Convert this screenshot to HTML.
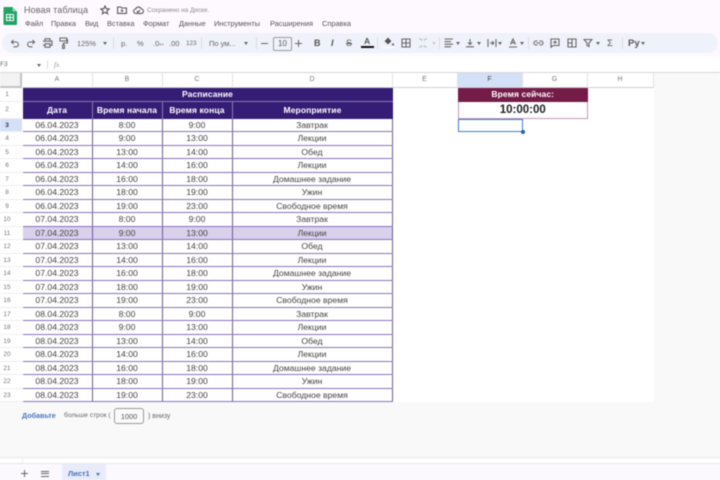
<!DOCTYPE html>
<html lang="ru">
<head>
<meta charset="utf-8">
<title>Новая таблица</title>
<style>
html,body{margin:0;padding:0;width:720px;height:480px;overflow:hidden;background:#fdf9fe}
body{position:relative;font-family:"Liberation Sans","Noto Sans CJK SC",sans-serif;color:#444}
#w{position:absolute;left:0;top:0;width:720px;height:480px;filter:blur(.5px)}
.a{position:absolute;white-space:nowrap}
.m{font-size:7.4px;top:19px;color:#555}
.c{position:absolute;top:0;height:100%;box-sizing:border-box;text-align:center;overflow:hidden}
.r{position:absolute;left:22.5px;width:370px;height:13.52px;font-size:8.65px;line-height:13px;color:#444;border-bottom:1px solid #8872bd;box-sizing:border-box}
.r .c{border-right:1px solid #6d5c97}
.n{position:absolute;left:0;width:22px;padding-right:8px;text-align:center;font-size:6.5px;color:#777;height:13.52px;line-height:13px;background:#fff;border-bottom:1px solid #eeeef0;box-sizing:border-box}
.h{position:absolute;top:73px;height:15px;line-height:14px;text-align:center;font-size:7px;color:#777;background:#fff;border-right:1px solid #e2e2e4;border-bottom:1px solid #d0d0d2;box-sizing:border-box}
.ic{font-size:8px;color:#666;top:38px;line-height:10px}
.ar{border:2.2px solid transparent;border-top:3px solid #666;top:42px}
.sp{top:37px;width:1px;height:12px;background:#dcdde6}
svg{display:block;fill:none;stroke:#666;stroke-width:1.1}
</style>
</head>
<body>
<div id="w">
<!-- top -->
<svg class="a" style="left:3px;top:7px;stroke:none" width="14" height="18" viewBox="0 0 14 18"><path d="M1.500 0H9.500L14 4.500V17a1 1 0 0 1-1 1H1.500a1 1 0 0 1-1-1V1a1 1 0 0 1 1-1z" fill="#1fa463"/><path d="M9.500 0L14 4.500H9.500z" fill="#8fd3ad"/><rect x="3.500" y="7.500" width="7" height="6" fill="none" stroke="#fff" stroke-width="1"/><path d="M3.500 10.500h7M7 7.500v6" stroke="#fff" stroke-width=".9"/></svg>
<div class="a" style="left:24px;top:3px;font-size:9px;color:#666;line-height:14px;letter-spacing:.1px">Новая таблица</div>
<svg class="a" style="left:100px;top:5px" width="10" height="10" viewBox="0 0 10 10"><path d="M5 1l1.200 2.700 2.900.3-2.200 1.900.7 2.900L5 7.300 2.400 8.800l.7-2.900L.9 4l2.900-.3z" stroke="#555"/></svg>
<svg class="a" style="left:117px;top:6px" width="10" height="8" viewBox="0 0 10 8"><path d="M.6 1h3l1 1h4.800v5.400H.6zM5 3.400v2.600M3.800 4.700h2.400" stroke="#555"/></svg>
<svg class="a" style="left:133px;top:6px" width="11" height="8" viewBox="0 0 11 8"><path d="M3 7.400a2.200 2.200 0 0 1-.3-4.400A3 3 0 0 1 8.300 3a2.200 2.200 0 0 1-.1 4.400zM3.800 5l1.200 1.200L7 4.200" stroke="#555"/></svg>
<div class="a" style="left:147px;top:6px;font-size:6.200px;color:#888;line-height:9px;letter-spacing:.1px">Сохранено на Диске.</div>
<div class="a m" style="left:25px">Файл</div>
<div class="a m" style="left:51px">Правка</div>
<div class="a m" style="left:85px">Вид</div>
<div class="a m" style="left:107px">Вставка</div>
<div class="a m" style="left:143px">Формат</div>
<div class="a m" style="left:179px">Данные</div>
<div class="a m" style="left:214px">Инструменты</div>
<div class="a m" style="left:270px">Расширения</div>
<div class="a m" style="left:322px">Справка</div>

<!-- toolbar -->
<div class="a" style="left:2px;top:33px;width:716px;height:20px;border-radius:10px;background:#f0f2fb"></div>
<svg class="a" style="left:10px;top:38px" width="10" height="10" viewBox="0 0 10 10"><path d="M3.500 2L1.500 4l2 2M1.500 4h4.500a2.400 2.400 0 0 1 0 4.800H3.500"/></svg>
<svg class="a" style="left:26px;top:38px" width="10" height="10" viewBox="0 0 10 10"><path d="M6.500 2l2 2-2 2M8.500 4H4a2.400 2.400 0 0 0 0 4.800h2.500"/></svg>
<svg class="a" style="left:42px;top:38px" width="11" height="10" viewBox="0 0 11 10"><path d="M3 3V.8h5V3M1 3.200h9v4H8M3 7.200H1M3 5.800h5v3.400H3z"/></svg>
<svg class="a" style="left:59px;top:37px" width="9" height="12" viewBox="0 0 9 12"><path d="M1 1h6.500v3H1zM7.500 2.500H8.500V6H4.500v2M3.600 8h1.800v3.400H3.600z"/></svg>
<div class="a ic" style="left:77px;font-size:7.400px;top:38.500px">125%</div>
<div class="a ar" style="left:103px"></div>
<div class="a sp" style="left:113px"></div>
<div class="a ic" style="left:121px;top:38.500px;font-size:7.500px">р.</div>
<div class="a ic" style="left:137px;top:38.500px;font-size:7.500px">%</div>
<div class="a ic" style="left:153px;top:38.500px;font-size:7.500px">.0<span style="font-size:5px">↤</span></div>
<div class="a ic" style="left:169px;top:38.500px;font-size:7.500px">.00</div>
<div class="a ic" style="left:186px;top:39px;font-size:6.300px">123</div>
<div class="a sp" style="left:201px"></div>
<div class="a ic" style="left:209px;top:38.500px;font-size:7.500px">По ум...</div>
<div class="a ar" style="left:244px"></div>
<div class="a sp" style="left:256px"></div>
<div class="a" style="left:261px;top:42.500px;width:7px;height:1.100px;background:#666"></div>
<div class="a" style="left:273px;top:37px;width:17px;height:12px;border:.9px solid #999;border-radius:2px;text-align:center;font-size:8px;line-height:12px;color:#555"> 10</div>
<div class="a" style="left:295px;top:42.500px;width:7px;height:1.100px;background:#666"></div>
<div class="a" style="left:298px;top:39.500px;width:1.100px;height:7px;background:#666"></div>
<div class="a" style="left:314px;top:37.500px;font-size:9px;font-weight:bold;color:#555;line-height:11px">B</div>
<div class="a" style="left:331px;top:37.500px;font-size:9px;font-style:italic;font-weight:bold;color:#555;line-height:11px">I</div>
<div class="a" style="left:346px;top:37.500px;font-size:9px;color:#555;line-height:11px;text-decoration:line-through">S</div>
<div class="a" style="left:364px;top:37px;font-size:8.500px;font-weight:bold;color:#555;line-height:9px">A</div>
<div class="a" style="left:361px;top:46px;width:13px;height:2px;background:#111"></div>
<div class="a sp" style="left:377px"></div>
<svg class="a" style="left:384px;top:37px" width="11" height="9" viewBox="0 0 11 9"><path d="M4 1L1 4.200 4 7l3-2.800zM9 6.500l1 1.500H8z" fill="#555" stroke="#555" stroke-width=".6"/></svg>
<div class="a" style="left:383px;top:46.500px;width:12px;height:1.500px;background:#fff"></div>
<svg class="a" style="left:401px;top:38px" width="10" height="10" viewBox="0 0 10 10"><path d="M1 1h8v8H1zM5 1v8M1 5h8"/></svg>
<svg class="a" style="left:418px;top:38px;opacity:.45" width="10" height="10" viewBox="0 0 10 10"><path d="M1 1h2.500v2.500M9 1H6.500v2.500M1 9h2.500V6.500M9 9H6.500V6.500" stroke-dasharray="1.600 .8"/></svg>
<div class="a" style="left:432px;top:42px;border:2.200px solid transparent;border-top:3px solid #ccc"></div>
<div class="a sp" style="left:439px"></div>
<svg class="a" style="left:444px;top:38px" width="10" height="10" viewBox="0 0 10 10"><path d="M.5 1h8.500M.5 3.600h6.500M.5 6.200h8.500M.5 8.800h6.500"/></svg>
<div class="a ar" style="left:456px"></div>
<svg class="a" style="left:465px;top:38px" width="10" height="10" viewBox="0 0 10 10"><path d="M5 1v5.500M3 4.500l2 2 2-2M1 8.800h8"/></svg>
<div class="a ar" style="left:477px"></div>
<svg class="a" style="left:487px;top:38px" width="10" height="10" viewBox="0 0 10 10"><path d="M1 1v8M9 1v8M3 5h3.500M5 3.200l1.800 1.800L5 6.800"/></svg>
<div class="a ar" style="left:498px"></div>
<svg class="a" style="left:508px;top:38px" width="10" height="10" viewBox="0 0 10 10"><path d="M2.500 6.500L5 1l2.500 5.500M3.400 4.800h3.200M1 9h8"/></svg>
<div class="a ar" style="left:520px"></div>
<div class="a sp" style="left:528px"></div>
<svg class="a" style="left:533px;top:40px" width="11" height="6" viewBox="0 0 11 6"><path d="M4.500 1H3a2 2 0 0 0 0 4h1.500M6.500 1H8a2 2 0 0 1 0 4H6.500M3.500 3h4"/></svg>
<svg class="a" style="left:550px;top:38px" width="10" height="10" viewBox="0 0 10 10"><path d="M1 1h8v6.500H3L1 9.300zM5 2.500v3.500M3.200 4.200h3.600"/></svg>
<svg class="a" style="left:567px;top:38px" width="10" height="10" viewBox="0 0 10 10"><path d="M1 1h8v8H1zM5 1v8M1 5h4"/></svg>
<svg class="a" style="left:583px;top:38px" width="10" height="10" viewBox="0 0 10 10"><path d="M1 1.500h8L6 5v3.500L4 7.500V5z"/></svg>
<div class="a ar" style="left:596px"></div>
<div class="a" style="left:607px;top:37.500px;font-size:9.500px;color:#555;line-height:11px">Σ</div>
<div class="a sp" style="left:622px"></div>
<div class="a" style="left:628px;top:37.500px;font-size:9.500px;font-weight:bold;color:#555;line-height:11px">Ру</div>
<div class="a ar" style="left:641px"></div>

<!-- formula bar -->
<div class="a" style="left:0;top:56px;width:720px;height:16px;background:#fff"></div>
<div class="a" style="left:0;top:60px;font-size:6.500px;color:#666;line-height:9px">F3</div>
<div class="a" style="left:37px;top:63.500px;border:2.200px solid transparent;border-top:3px solid #666"></div>
<div class="a" style="left:47px;top:60px;width:1px;height:9px;background:#ddd"></div>
<div class="a" style="left:54px;top:60px;font-size:7.500px;font-style:italic;color:#999;line-height:9px;font-family:'Liberation Serif',serif">fx</div>

<!-- sheet bg -->
<div class="a" style="left:0;top:72px;width:720px;height:385px;background:#f9f9fa;border-top:1px solid #d8d8da;box-sizing:border-box"></div>
<div class="a" style="left:22px;top:88px;width:632px;height:314px;background:#fff"></div>
<div class="a" style="left:0;top:73px;width:22px;height:15px;background:#f3f3f4;border-right:2px solid #c4c4c6;border-bottom:2px solid #c4c4c6;box-sizing:border-box"></div>
<div class="h" style="left:22.500px;width:70px">A</div>
<div class="h" style="left:92.500px;width:70px">B</div>
<div class="h" style="left:162.500px;width:70px">C</div>
<div class="h" style="left:232.500px;width:160px">D</div>
<div class="h" style="left:392.500px;width:65px">E</div>
<div class="h" style="left:457.500px;width:65px;background:#d3e0f8;color:#444">F</div>
<div class="h" style="left:522.500px;width:65px">G</div>
<div class="h" style="left:587.500px;width:66px">H</div>

<!-- row numbers -->
<div class="n" style="top:88px;height:13.500px">1</div>
<div class="n" style="top:101.500px;height:17px;line-height:16px">2</div>
<div class="n" style="top:118.500px;background:#d3e0f8;color:#333;font-weight:bold">3</div>
<div class="n" style="top:132.020px">4</div>
<div class="n" style="top:145.540px">5</div>
<div class="n" style="top:159.060px">6</div>
<div class="n" style="top:172.580px">7</div>
<div class="n" style="top:186.100px">8</div>
<div class="n" style="top:199.620px">9</div>
<div class="n" style="top:213.140px">10</div>
<div class="n" style="top:226.660px">11</div>
<div class="n" style="top:240.180px">12</div>
<div class="n" style="top:253.700px">13</div>
<div class="n" style="top:267.220px">14</div>
<div class="n" style="top:280.740px">15</div>
<div class="n" style="top:294.260px">16</div>
<div class="n" style="top:307.780px">17</div>
<div class="n" style="top:321.300px">18</div>
<div class="n" style="top:334.820px">19</div>
<div class="n" style="top:348.340px">20</div>
<div class="n" style="top:361.860px">21</div>
<div class="n" style="top:375.380px">22</div>
<div class="n" style="top:388.900px">23</div>

<!-- headers -->
<div class="a" style="left:22.500px;top:88px;width:370px;height:13.500px;background:#351c75;color:#fff;font-size:8.500px;font-weight:bold;text-align:center;line-height:13px;letter-spacing:.1px;border-bottom:1px solid #8a78b5;box-sizing:border-box">Расписание</div>
<div class="a" style="left:22.500px;top:101.500px;width:370px;height:17px;background:#351c75;color:#fff;font-size:8.500px;font-weight:bold;line-height:17px;letter-spacing:.1px">
<div class="c" style="left:0;width:70px;border-right:1px solid #8a78b5">Дата</div>
<div class="c" style="left:70px;width:70px;border-right:1px solid #8a78b5">Время начала</div>
<div class="c" style="left:140px;width:70px;border-right:1px solid #8a78b5">Время конца</div>
<div class="c" style="left:210px;width:160px">Мероприятие</div>
</div>

<!-- rows -->
<div class="r" style="top:118.500px"><div class="c" style="left:0;width:70px">06.04.2023</div><div class="c" style="left:70px;width:70px">8:00</div><div class="c" style="left:140px;width:70px">9:00</div><div class="c" style="left:210px;width:160px">Завтрак</div></div>
<div class="r" style="top:132.020px"><div class="c" style="left:0;width:70px">06.04.2023</div><div class="c" style="left:70px;width:70px">9:00</div><div class="c" style="left:140px;width:70px">13:00</div><div class="c" style="left:210px;width:160px">Лекции</div></div>
<div class="r" style="top:145.540px"><div class="c" style="left:0;width:70px">06.04.2023</div><div class="c" style="left:70px;width:70px">13:00</div><div class="c" style="left:140px;width:70px">14:00</div><div class="c" style="left:210px;width:160px">Обед</div></div>
<div class="r" style="top:159.060px"><div class="c" style="left:0;width:70px">06.04.2023</div><div class="c" style="left:70px;width:70px">14:00</div><div class="c" style="left:140px;width:70px">16:00</div><div class="c" style="left:210px;width:160px">Лекции</div></div>
<div class="r" style="top:172.580px"><div class="c" style="left:0;width:70px">06.04.2023</div><div class="c" style="left:70px;width:70px">16:00</div><div class="c" style="left:140px;width:70px">18:00</div><div class="c" style="left:210px;width:160px">Домашнее задание</div></div>
<div class="r" style="top:186.100px"><div class="c" style="left:0;width:70px">06.04.2023</div><div class="c" style="left:70px;width:70px">18:00</div><div class="c" style="left:140px;width:70px">19:00</div><div class="c" style="left:210px;width:160px">Ужин</div></div>
<div class="r" style="top:199.620px"><div class="c" style="left:0;width:70px">06.04.2023</div><div class="c" style="left:70px;width:70px">19:00</div><div class="c" style="left:140px;width:70px">23:00</div><div class="c" style="left:210px;width:160px">Свободное время</div></div>
<div class="r" style="top:213.140px"><div class="c" style="left:0;width:70px">07.04.2023</div><div class="c" style="left:70px;width:70px">8:00</div><div class="c" style="left:140px;width:70px">9:00</div><div class="c" style="left:210px;width:160px">Завтрак</div></div>
<div class="r" style="top:226.660px;background:#d9d0ec"><div class="c" style="left:0;width:70px">07.04.2023</div><div class="c" style="left:70px;width:70px">9:00</div><div class="c" style="left:140px;width:70px">13:00</div><div class="c" style="left:210px;width:160px">Лекции</div></div>
<div class="r" style="top:240.180px"><div class="c" style="left:0;width:70px">07.04.2023</div><div class="c" style="left:70px;width:70px">13:00</div><div class="c" style="left:140px;width:70px">14:00</div><div class="c" style="left:210px;width:160px">Обед</div></div>
<div class="r" style="top:253.700px"><div class="c" style="left:0;width:70px">07.04.2023</div><div class="c" style="left:70px;width:70px">14:00</div><div class="c" style="left:140px;width:70px">16:00</div><div class="c" style="left:210px;width:160px">Лекции</div></div>
<div class="r" style="top:267.220px"><div class="c" style="left:0;width:70px">07.04.2023</div><div class="c" style="left:70px;width:70px">16:00</div><div class="c" style="left:140px;width:70px">18:00</div><div class="c" style="left:210px;width:160px">Домашнее задание</div></div>
<div class="r" style="top:280.740px"><div class="c" style="left:0;width:70px">07.04.2023</div><div class="c" style="left:70px;width:70px">18:00</div><div class="c" style="left:140px;width:70px">19:00</div><div class="c" style="left:210px;width:160px">Ужин</div></div>
<div class="r" style="top:294.260px"><div class="c" style="left:0;width:70px">07.04.2023</div><div class="c" style="left:70px;width:70px">19:00</div><div class="c" style="left:140px;width:70px">23:00</div><div class="c" style="left:210px;width:160px">Свободное время</div></div>
<div class="r" style="top:307.780px"><div class="c" style="left:0;width:70px">08.04.2023</div><div class="c" style="left:70px;width:70px">8:00</div><div class="c" style="left:140px;width:70px">9:00</div><div class="c" style="left:210px;width:160px">Завтрак</div></div>
<div class="r" style="top:321.300px"><div class="c" style="left:0;width:70px">08.04.2023</div><div class="c" style="left:70px;width:70px">9:00</div><div class="c" style="left:140px;width:70px">13:00</div><div class="c" style="left:210px;width:160px">Лекции</div></div>
<div class="r" style="top:334.820px"><div class="c" style="left:0;width:70px">08.04.2023</div><div class="c" style="left:70px;width:70px">13:00</div><div class="c" style="left:140px;width:70px">14:00</div><div class="c" style="left:210px;width:160px">Обед</div></div>
<div class="r" style="top:348.340px"><div class="c" style="left:0;width:70px">08.04.2023</div><div class="c" style="left:70px;width:70px">14:00</div><div class="c" style="left:140px;width:70px">16:00</div><div class="c" style="left:210px;width:160px">Лекции</div></div>
<div class="r" style="top:361.860px"><div class="c" style="left:0;width:70px">08.04.2023</div><div class="c" style="left:70px;width:70px">16:00</div><div class="c" style="left:140px;width:70px">18:00</div><div class="c" style="left:210px;width:160px">Домашнее задание</div></div>
<div class="r" style="top:375.380px"><div class="c" style="left:0;width:70px">08.04.2023</div><div class="c" style="left:70px;width:70px">18:00</div><div class="c" style="left:140px;width:70px">19:00</div><div class="c" style="left:210px;width:160px">Ужин</div></div>
<div class="r" style="top:388.900px"><div class="c" style="left:0;width:70px">08.04.2023</div><div class="c" style="left:70px;width:70px">19:00</div><div class="c" style="left:140px;width:70px">23:00</div><div class="c" style="left:210px;width:160px">Свободное время</div></div>

<!-- time box -->
<div class="a" style="left:457.500px;top:88px;width:130.500px;height:13.500px;background:#741b47;color:#fff;font-size:8.500px;font-weight:bold;text-align:center;line-height:13.500px;letter-spacing:.1px">Время сейчас:</div>
<div class="a" style="left:457.500px;top:101.500px;width:130.500px;height:17px;background:#fff;color:#222;font-size:11.500px;font-weight:bold;text-align:center;line-height:16px;border:1px solid #c49ab5;border-top:0;box-sizing:border-box">10:00:00</div>
<div class="a" style="left:457.500px;top:118.500px;width:65px;height:13.500px;border:1.200px solid #3a7bd8;box-sizing:border-box"></div>
<div class="a" style="left:520.500px;top:130px;width:4px;height:4px;border-radius:50%;background:#1a5fc8"></div>

<!-- add rows -->
<div class="a" style="left:22px;top:411px;font-size:7.200px;font-weight:bold;color:#4a78bb;line-height:10px">Добавьте</div>
<div class="a" style="left:64px;top:410.500px;font-size:6.700px;color:#666;line-height:10px">больше строк (</div>
<div class="a" style="left:114px;top:408px;width:30px;height:16px;border:.9px solid #999;border-radius:3px;background:#fafafa;text-align:center;font-size:7.400px;line-height:15px;color:#555;box-sizing:border-box">1000</div>
<div class="a" style="left:148px;top:412px;font-size:7px;color:#666;line-height:10px">) внизу</div>

<!-- bottom -->
<div class="a" style="left:0;top:456.500px;width:720px;height:7px;background:#fff;border-top:1px solid #e8e8ea;box-sizing:border-box"></div>
<div class="a" style="left:22px;top:457px;width:1px;height:6px;background:#eee"></div>
<div class="a" style="left:0;top:463px;width:720px;height:17px;background:#fbf9fe;border-top:1px solid #e6e7ec;box-sizing:border-box"></div>
<div class="a" style="left:21px;top:473px;width:7px;height:1.200px;background:#666"></div>
<div class="a" style="left:24px;top:470px;width:1.200px;height:7px;background:#666"></div>
<div class="a" style="left:41px;top:470.500px;width:8px;height:1px;background:#666"></div>
<div class="a" style="left:41px;top:473px;width:8px;height:1px;background:#666"></div>
<div class="a" style="left:41px;top:475.500px;width:8px;height:1px;background:#666"></div>
<div class="a" style="left:62px;top:464px;width:44px;height:16px;background:#e8ebf9"></div>
<div class="a" style="left:68px;top:469px;font-size:7.400px;font-weight:bold;color:#4a70b8;line-height:10px">Лист1</div>
<div class="a" style="left:95.500px;top:473px;border:2.200px solid transparent;border-top:3px solid #4a70b8"></div>
</div>
</body>
</html>
